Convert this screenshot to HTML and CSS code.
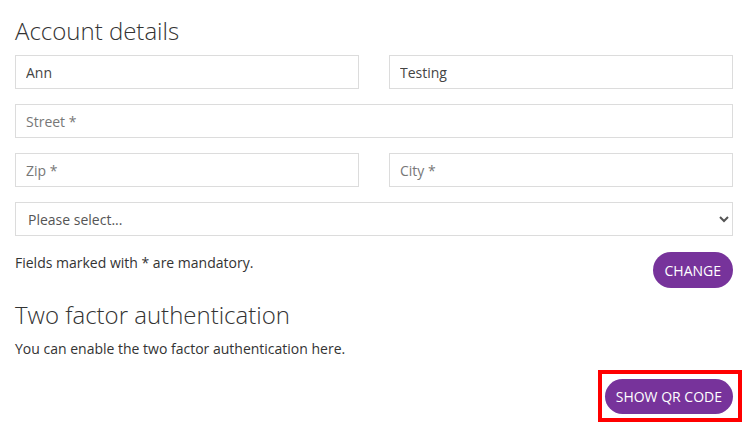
FILE: index.html
```html
<!DOCTYPE html>
<html lang="en">
<head>
<meta charset="utf-8">
<title>Account details</title>
<link rel="stylesheet" href="styles.css">
</head>
<body>
<main class="page">
  <h2 class="section-title">Account details</h2>
  <form class="form-grid">
    <input class="field" type="text" value="Ann">
    <input class="field" type="text" value="Testing">
    <input class="field field-wide" type="text" placeholder="Street *">
    <input class="field" type="text" placeholder="Zip *">
    <input class="field" type="text" placeholder="City *">
    <select class="field field-wide select">
      <option>Please select...</option>
    </select>
  </form>
  <div class="action-row">
    <p class="note">Fields marked with * are mandatory.</p>
    <button class="btn" type="button">CHANGE</button>
  </div>
  <h2 class="section-title second">Two factor authentication</h2>
  <p class="note intro">You can enable the two factor authentication here.</p>
  <div class="qr-row">
    <div class="highlight">
      <button class="btn btn-qr" type="button">SHOW QR CODE</button>
    </div>
  </div>
</main>
</body>
</html>
```
FILE: styles.css
```css
* { box-sizing: border-box; }
html, body { margin: 0; padding: 0; background: #fff; }
body { font-family: "Open Sans", "Liberation Sans", sans-serif; color: #333; }
.page { width: 718px; margin-left: 15px; padding-top: 13px; }
.section-title { margin: 0; font-weight: 300; font-size: 24px; line-height: 36px; color: #333; }
.form-grid { display: grid; grid-template-columns: 1fr 1fr; gap: 15px 30px; margin-top: 6px; }
.field { height: 34px; border: 1px solid #dcdcdc; border-radius: 0; padding: 0 10px; font-family: inherit; font-size: 14px; color: #444; background: #fff; outline: none; width: 100%; }
.field::placeholder { color: #777; }
.field-wide { grid-column: 1 / span 2; }
.select { padding-left: 8px; color: #555; }
.action-row { display: flex; justify-content: space-between; align-items: flex-start; margin-top: 16px; }
.note { margin: 0; font-size: 14px; line-height: 20px; color: #333; }
.action-row .note { padding-top: 1px; }
.btn { height: 36px; padding: 0 12px; border: 0; border-radius: 18px; background: #77339b; color: #fff; font-family: inherit; font-size: 14px; cursor: pointer; }
.btn-qr { height: 35px; padding: 0 11px; }
.second { margin-top: 9px; }
.intro { margin-top: 6px; }
.qr-row { display: flex; justify-content: flex-end; margin-top: 11px; margin-right: -9px; }
.highlight { border: 4px solid #ff0000; padding: 5px 5px 4px 3px; display: flex; }
```
